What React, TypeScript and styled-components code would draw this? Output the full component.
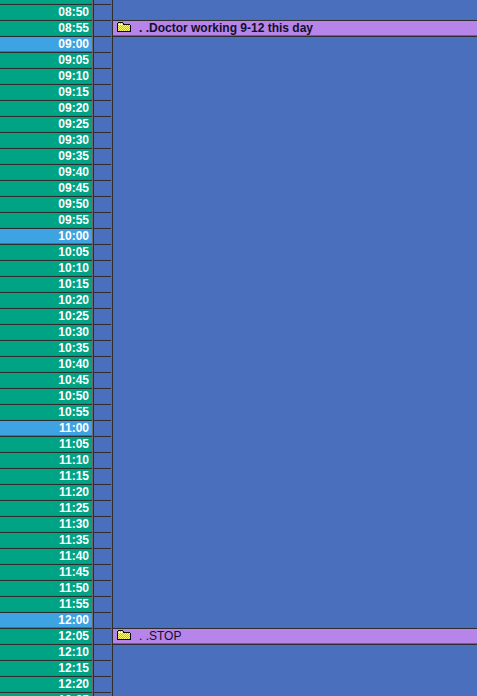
import React from 'react';
import styled, { createGlobalStyle, css } from 'styled-components';

const GlobalStyle = createGlobalStyle`
  html, body {
    margin: 0;
    padding: 0;
    height: 696px;
    overflow: hidden;
    background: #4a6fbd;
  }
`;

const rowLine = css`
  box-shadow: inset 0 -1px 0 #2e2e2e, inset 0 -2px 0 #6a6a6a;
`;

const Schedule = styled.div`
  width: 477px;
  height: 696px;
  overflow: hidden;
  font-family: "Liberation Sans", Arial, sans-serif;
`;

const Row = styled.div<{ $height: number }>`
  display: grid;
  grid-template-columns: 92px 2px 17px 2px 1fr;
  height: ${({ $height }) => $height}px;
  background: #4a6fbd;
`;

const Time = styled.div<{ $hour: boolean }>`
  ${rowLine}
  background: ${({ $hour }) => ($hour ? '#3ea3e2' : '#00a383')};
  color: #fff;
  font-size: 12px;
  font-weight: bold;
  line-height: 14px;
  text-align: right;
  padding-right: 3px;
`;

const Divider = styled.div`
  background: #2e2e2e;
  border-left: 1px solid #6a6a6a;
`;

const Gutter = styled.div`
  ${rowLine}
  background: #4a6fbd;
`;

const Slot = styled.div`
  background: #4a6fbd;
`;

const FilledSlot = styled.div`
  ${rowLine}
  display: flex;
  align-items: flex-start;
  gap: 8px;
  padding-left: 4px;
  background: #b784ea;
  color: #10102a;
  font-size: 12px;
  line-height: 14px;
  position: relative;

  /* the line above a booked slot sits over the row before it */
  &::before {
    content: '';
    position: absolute;
    left: 0;
    right: 0;
    top: -2px;
    height: 2px;
    background: linear-gradient(#6a6a6a 50%, #2e2e2e 50%);
  }
`;

const FolderIcon = styled.svg`
  flex: none;
  margin-top: 1px;
`;

const Note = styled.span<{ $bold: boolean }>`
  font-weight: ${({ $bold }) => ($bold ? 'bold' : 'normal')};
`;

const Folder = ({ id }: { id: string }) => (
  <FolderIcon width="14" height="10" viewBox="0 0 14 10" shapeRendering="crispEdges">
    <defs>
      <pattern id={id} width="2" height="2" patternUnits="userSpaceOnUse">
        <rect width="2" height="2" fill="#ffff70" />
        <rect width="1" height="1" fill="#c890f0" />
        <rect x="1" y="1" width="1" height="1" fill="#c890f0" />
      </pattern>
    </defs>
    <path d="M0.5 9.5V1.5L1.5 0.5H5.5L6.5 1.5V2.5H12.5L13.5 3.5V9.5Z" fill={`url(#${id})`} stroke="#0c0c0c" />
    <path d="M1 2.5H6" stroke="#ffffa0" />
  </FolderIcon>
);

type Entry = { text: string; bold: boolean };

const entries: Record<string, Entry> = {
  '08:55': { text: '. .Doctor working 9-12 this day', bold: true },
  '12:05': { text: '. .STOP', bold: false },
};

const times: string[] = [];
for (let m = 8 * 60 + 50; m <= 12 * 60 + 25; m += 5) {
  const h = String(Math.floor(m / 60)).padStart(2, '0');
  const min = String(m % 60).padStart(2, '0');
  times.push(`${h}:${min}`);
}

export default function App() {
  return (
    <Schedule>
      <GlobalStyle />
      <Row $height={5}>
        <Time $hour={false} />
        <Divider />
        <Gutter />
        <Divider />
        <Slot />
      </Row>
      {times.map((t) => {
        const entry = entries[t];
        return (
          <Row key={t} $height={16}>
            <Time $hour={t.endsWith(':00')}>{t}</Time>
            <Divider />
            <Gutter />
            <Divider />
            {entry ? (
              <FilledSlot>
                <Folder id={`folder-${t}`} />
                <Note $bold={entry.bold}>{entry.text}</Note>
              </FilledSlot>
            ) : (
              <Slot />
            )}
          </Row>
        );
      })}
    </Schedule>
  );
}
